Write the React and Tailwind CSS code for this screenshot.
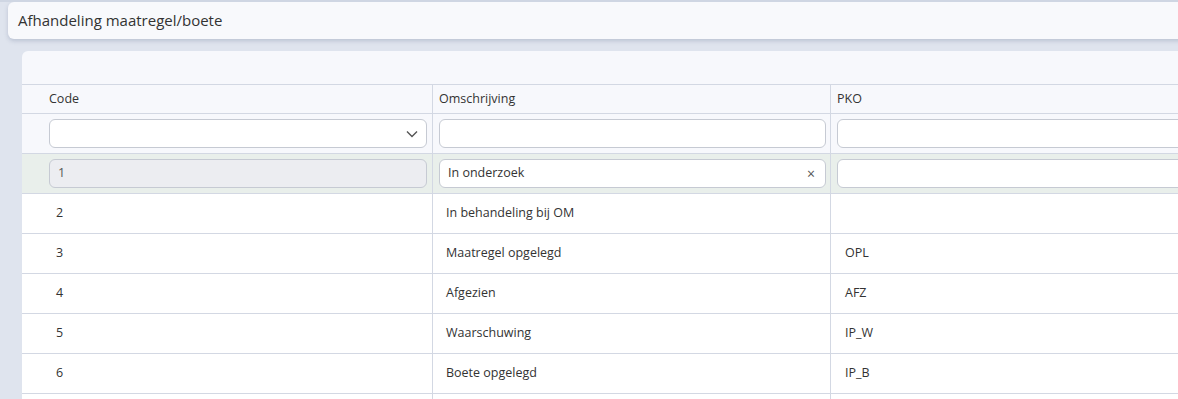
import React from "react";

const rows = [
  { code: "2", oms: "In behandeling bij OM", pko: "" },
  { code: "3", oms: "Maatregel opgelegd", pko: "OPL" },
  { code: "4", oms: "Afgezien", pko: "AFZ" },
  { code: "5", oms: "Waarschuwing", pko: "IP_W" },
  { code: "6", oms: "Boete opgelegd", pko: "IP_B" },
  { code: "7", oms: "", pko: "" },
];

const font = { fontFamily: '"Open Sans", "Noto Sans", "Liberation Sans", sans-serif' };

export default function App() {
  return (
    <div className="w-[1178px] h-[399px] overflow-hidden bg-[#dfe4ee] text-[#333] border-t-2 border-[#cfd6e3]" style={font}>
      <div className="ml-[8px] w-[1200px] h-[37px] bg-[#f8f9fc] rounded-[6px] shadow-[0_2px_4px_rgba(80,95,130,0.25)] flex items-center pl-[10px] text-[15px]">
        Afhandeling maatregel/boete
      </div>
      <div className="ml-[22px] mt-[12px] w-[1250px] bg-[#f7f8fc] rounded-tl-[6px] text-[12.5px]">
        <div className="h-[34px] border-b border-[#d3d8e3]" />
        <div className="grid grid-cols-[22px_389px_398px_398px] h-[29px] border-b border-[#d3d8e3] items-center">
          <div />
          <div className="pl-[5px] h-full flex items-center border-r border-[#d3d8e3]">Code</div>
          <div className="pl-[6px] h-full flex items-center border-r border-[#d3d8e3]">Omschrijving</div>
          <div className="pl-[6px] h-full flex items-center">PKO</div>
        </div>
        <div className="grid grid-cols-[22px_389px_398px_398px] h-[40px] border-b border-[#d3d8e3]">
          <div />
          <div className="pl-[5px] pr-[5px] h-full flex items-center border-r border-[#d3d8e3]">
            <div className="w-full h-[29px] bg-white border border-[#c6cad3] rounded-[6px] flex items-center justify-end pr-[8px]">
              <svg width="12" height="8" viewBox="0 0 12 8" fill="none">
                <path d="M1 1.5L6 6.5L11 1.5" stroke="#555" strokeWidth="1.4" />
              </svg>
            </div>
          </div>
          <div className="pl-[6px] pr-[4px] h-full flex items-center border-r border-[#d3d8e3]">
            <div className="w-full h-[29px] bg-white border border-[#c6cad3] rounded-[6px]" />
          </div>
          <div className="pl-[6px] pr-[4px] h-full flex items-center">
            <div className="w-full h-[29px] bg-white border border-[#c6cad3] rounded-[6px]" />
          </div>
        </div>
        <div className="grid grid-cols-[22px_389px_398px_398px] h-[40px] border-b border-[#d3d8e3] bg-[#e9efeb]">
          <div />
          <div className="pl-[5px] pr-[5px] h-full flex items-center border-r border-[#d3d8e3]">
            <div className="w-full h-[29px] bg-[#ecedf1] border border-[#c6cad3] rounded-[6px] flex items-center pl-[8px] text-[#555]">1</div>
          </div>
          <div className="pl-[6px] pr-[4px] h-full flex items-center border-r border-[#d3d8e3]">
            <div className="w-full h-[29px] bg-white border border-[#c6cad3] rounded-[6px] flex items-center justify-between pl-[8px] pr-[10px]">
              <span>In onderzoek</span>
              <span className="text-[#555] text-[14px] leading-none">×</span>
            </div>
          </div>
          <div className="pl-[6px] pr-[4px] h-full flex items-center">
            <div className="w-full h-[29px] bg-white border border-[#c6cad3] rounded-[6px]" />
          </div>
        </div>
        {rows.map((r) => (
          <div key={r.code} className="grid grid-cols-[22px_389px_398px_398px] h-[40px] border-b border-[#d3d8e3] bg-white">
            <div className="bg-white" />
            <div className="pl-[12px] h-full flex items-center border-r border-[#d3d8e3]">{r.oms ? r.code : ""}</div>
            <div className="pl-[13px] h-full flex items-center border-r border-[#d3d8e3]">{r.oms}</div>
            <div className="pl-[14px] h-full flex items-center">{r.pko}</div>
          </div>
        ))}
      </div>
    </div>
  );
}
